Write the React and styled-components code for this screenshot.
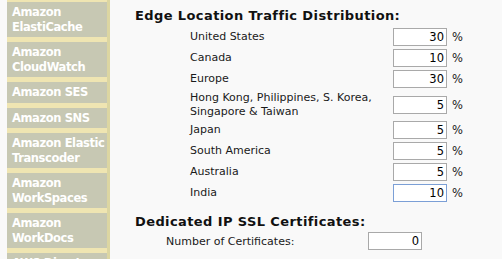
import React from 'react';
import styled, { createGlobalStyle } from 'styled-components';

const GlobalStyle = createGlobalStyle`
html,body{
  margin:0;
  padding:0;
  background:#f9f9f9;
  font-family:"DejaVu Sans",Verdana,sans-serif;
  overflow:hidden;
}
`

const services = [
  ['Amazon', 'ElastiCache'],
  ['Amazon', 'CloudWatch'],
  ['Amazon SES'],
  ['Amazon SNS'],
  ['Amazon Elastic', 'Transcoder'],
  ['Amazon', 'WorkSpaces'],
  ['Amazon', 'WorkDocs'],
  ['AWS Direct', 'Connect'],
];

const regions = [
  { name: 'United States', value: '30' },
  { name: 'Canada', value: '10' },
  { name: 'Europe', value: '30' },
  { name: 'Hong Kong, Philippines, S. Korea, Singapore & Taiwan', value: '5' },
  { name: 'Japan', value: '5' },
  { name: 'South America', value: '5' },
  { name: 'Australia', value: '5' },
  { name: 'India', value: '10', active: true },
];

function App() {
  return (
    <Page>
      <GlobalStyle />
      <Sidebar>
        {services.map((lines, i) =>
          <NavItem key={i} href="#">
            {lines.map((l, j) => <span key={j}>{l}</span>)}
          </NavItem>
        )}
      </Sidebar>
      <Main>
        <Heading>Edge Location Traffic Distribution:</Heading>
        <Rows>
          {regions.map((r, i) =>
            <Row key={i}>
              <Label>{r.name}</Label>
              <Field defaultValue={r.value} $active={r.active} />
              <Unit>%</Unit>
            </Row>
          )}
        </Rows>
        <Heading $second>Dedicated IP SSL Certificates:</Heading>
        <CertRow>
          <CertLabel>Number of Certificates:</CertLabel>
          <Field defaultValue="0" />
        </CertRow>
      </Main>
    </Page>
  )
}

export default App;

const Page = styled.div`
display:flex;
align-items:flex-start;
width:502px;
height:259px;
overflow:hidden;
`
const Sidebar = styled.nav`
margin-left:7px;
width:100px;
flex-shrink:0;
display:flex;
flex-direction:column;
gap:5px;
padding-top:2px;
background:#efe5b2;
border-right:3px solid #dcd6a2;
min-height:300px;
`
const NavItem = styled.a`
display:flex;
flex-direction:column;
padding:3px 0 3px 5px;
background:#c7c8b3;
color:#fff;
font-weight:bold;
font-size:11.5px;
line-height:14.5px;
text-decoration:none;
white-space:nowrap;
overflow:hidden;
letter-spacing:-0.4px;
`
const Main = styled.div`
flex:1;
padding:8px 0 0 25px;
color:#1a1a1a;
`
const Heading = styled.h3`
margin:0;
margin-top:${props => props.$second ? '12px' : '0'};
font-size:13px;
line-height:15px;
font-weight:bold;
color:#111;
letter-spacing:0.4px;
white-space:nowrap;
`
const Rows = styled.div`
display:flex;
flex-direction:column;
gap:3px;
margin-top:5px;
padding-left:55px;
`
const Row = styled.div`
display:flex;
align-items:center;
min-height:18px;
`
const Label = styled.div`
width:203px;
font-size:11px;
line-height:13.5px;
padding-right:8px;
box-sizing:border-box;
`
const Field = styled.input`
width:54px;
height:18px;
box-sizing:border-box;
border:1px solid ${props => props.$active ? '#7b9fd6' : '#a9a9a9'};
background:#fff;
font-family:"DejaVu Sans",Verdana,sans-serif;
font-size:11.5px;
color:#000;
text-align:right;
padding:0 2px;
outline:none;
`
const Unit = styled.span`
margin-left:5px;
font-size:11.5px;
`
const CertRow = styled.div`
display:flex;
align-items:center;
margin-top:3px;
padding-left:31px;
`
const CertLabel = styled.div`
width:202px;
font-size:11px;
`
